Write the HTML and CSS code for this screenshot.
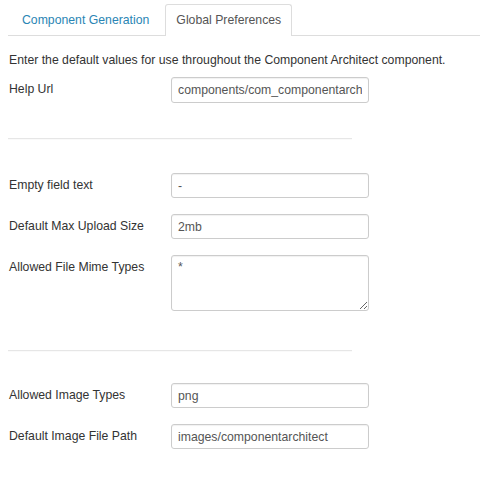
FILE: index.html
```html
<!DOCTYPE html>
<html>
<head>
<meta charset="utf-8">
<link rel="stylesheet" href="styles.css">
</head>
<body>
<div class="page">
  <ul class="tabs">
    <li class="tab"><a class="tab-link">Component Generation</a></li>
    <li class="tab active"><a class="tab-link">Global Preferences</a></li>
  </ul>
  <p class="desc">Enter the default values for use throughout the Component Architect component.</p>
  <div class="group first">
    <div class="row"><label class="lbl">Help Url</label><input class="inp tall" type="text" value="components/com_componentarchitect/help/en-GB/"></div>
  </div>
  <hr class="sep s1">
  <div class="group g2">
    <div class="row"><label class="lbl">Empty field text</label><input class="inp" type="text" value="-"></div>
    <div class="row"><label class="lbl">Default Max Upload Size</label><input class="inp" type="text" value="2mb"></div>
    <div class="row"><label class="lbl">Allowed File Mime Types</label><textarea class="inp area">*</textarea></div>
  </div>
  <hr class="sep s2">
  <div class="group g3">
    <div class="row"><label class="lbl">Allowed Image Types</label><input class="inp" type="text" value="png"></div>
    <div class="row"><label class="lbl">Default Image File Path</label><input class="inp" type="text" value="images/componentarchitect"></div>
  </div>
</div>
</body>
</html>
```

FILE: styles.css
```css
html, body {
  margin: 0;
  padding: 0;
  background: #fff;
}
.page {
  font-family: "Liberation Sans", Arial, sans-serif;
  font-size: 12.25px;
  color: #333;
  padding: 4px 0 0 8px;
  width: 472px;
}
.tabs {
  list-style: none;
  margin: 0;
  padding: 0;
  display: flex;
  border-bottom: 1px solid #ddd;
  height: 31px;
}
.tab {
  margin-right: 3px;
  margin-bottom: -1px;
}
.tab-link {
  display: block;
  height: 30px;
  line-height: 30px;
  padding: 0 12px 0 13px;
  color: #2a85b4;
  border: 1px solid transparent;
  border-bottom: none;
  border-radius: 3px 3px 0 0;
}
.active .tab-link {
  color: #555;
  background: #fff;
  border-color: #ddd;
  height: 31px;
  padding: 0 10px;
}
.desc {
  margin: 17px 0 0 1px;
  line-height: 14px;
}
.group {
  display: flex;
  flex-direction: column;
  gap: 16px;
}
.group.first {
  margin-top: 10px;
}
.group.g2 {
  margin-top: 33px;
}
.group.g3 {
  margin-top: 31px;
}
.row {
  display: flex;
  align-items: flex-start;
}
.lbl {
  width: 162px;
  flex: none;
  padding-left: 1px;
  line-height: 25px;
}
.inp {
  box-sizing: border-box;
  width: 198px;
  height: 25px;
  margin: 0;
  padding: 0 6px;
  font-family: "Liberation Sans", Arial, sans-serif;
  font-size: 12.25px;
  color: #555;
  border: 1px solid #ccc;
  border-radius: 3px;
  box-shadow: inset 0 1px 1px rgba(0,0,0,0.06);
  background: #fff;
  outline: none;
}
.inp.tall {
  height: 26px;
}
.area {
  height: 56px;
  padding: 4px 6px;
  resize: both;
  line-height: 14px;
}
.sep {
  width: 344px;
  margin: 0;
  border: 0;
  border-top: 1px solid #e6e6e6;
  border-bottom: 1px solid #fafafa;
}
.sep.s1 {
  margin-top: 35px;
}
.sep.s2 {
  margin-top: 39px;
}
```
